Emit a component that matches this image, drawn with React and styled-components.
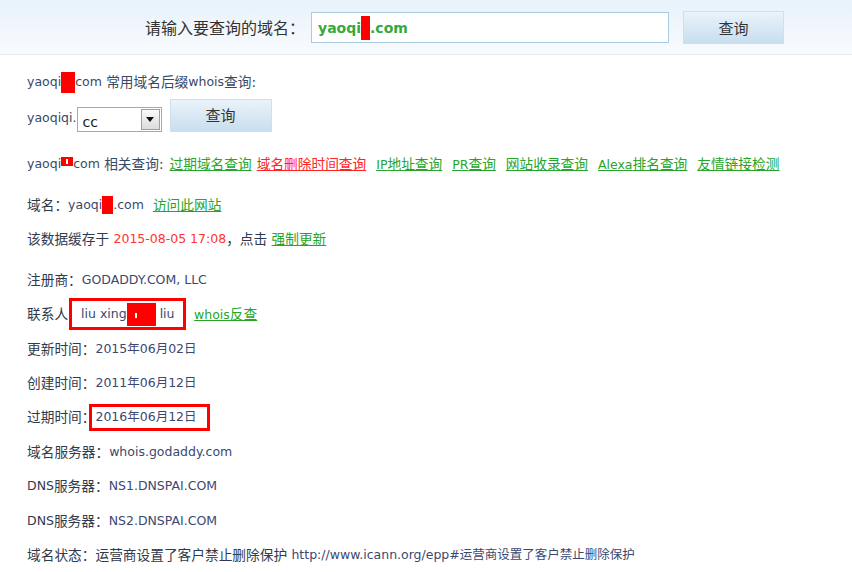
import React from "react";
import styled, { createGlobalStyle } from "styled-components";

const GlobalStyle = createGlobalStyle`
  html, body {
    margin: 0;
    padding: 0;
    background: #fff;
  }
  body {
    font-family: "DejaVu Sans", "Noto Sans CJK SC", sans-serif;
    font-size: 13.7px;
    color: #2f3a4c;
  }
`;

const Page = styled.div`
  width: 852px;
  height: 572px;
  overflow: hidden;
  background: #fff;
`;

const Header = styled.div`
  height: 54px;
  border-bottom: 1px solid #e1ebf3;
  background: linear-gradient(#e8f2fa, #f8fbfe);
  display: flex;
  align-items: center;
  padding-left: 145px;
`;

const HeaderLabel = styled.span`
  font-size: 16px;
  color: #333;
  width: 166px;
  white-space: nowrap;
`;

const SearchField = styled.div`
  box-sizing: border-box;
  width: 358px;
  height: 31px;
  margin-top: 1px;
  border: 1px solid #a9cce4;
  background: #fff;
  display: flex;
  align-items: center;
  padding-left: 6px;
  font-family: "DejaVu Sans", sans-serif;
  font-weight: bold;
  font-size: 14px;
  color: #37a83a;
`;

const QueryButton = styled.div`
  box-sizing: border-box;
  width: ${({ $w }) => $w}px;
  height: 33px;
  margin-left: ${({ $ml }) => $ml}px;
  border: 1px solid #cde0ee;
  background: linear-gradient(#eaf3fa, #c8deee);
  display: flex;
  align-items: center;
  justify-content: center;
  font-size: 15px;
  color: #333;
  align-self: ${({ $top }) => ($top ? "flex-start" : "center")};
`;

const Content = styled.div`
  padding: 10px 0 0 27px;
`;

const Row = styled.div`
  display: flex;
  align-items: center;
  height: ${({ $h }) => $h || 34}px;
  margin-top: ${({ $mt }) => $mt || 0}px;
  line-height: 20px;
  white-space: nowrap;
  color: ${({ $tone }) => $tone || "#2f3a4c"};
`;

const En = styled.span`
  font-size: 12.5px;
  color: ${({ $c }) => $c || "inherit"};
`;

const Value = styled.span`
  font-size: 12.5px;
  color: #3b4870;
`;

const Redact = styled.span`
  display: inline-block;
  width: ${({ $w }) => $w}px;
  height: ${({ $h }) => $h}px;
  background: #ff0000;
  margin-top: ${({ $dy }) => $dy || 0}px;
  position: relative;
`;

const Speck = styled.span`
  position: absolute;
  left: ${({ $x }) => $x}px;
  top: ${({ $y }) => $y}px;
  width: 2px;
  height: 5px;
  background: #fff;
`;

const Link = styled.a`
  color: ${({ $red }) => ($red ? "#ff2424" : "#27a52a")};
  text-decoration: underline;
  margin-left: ${({ $ml }) => ($ml == null ? 10 : $ml)}px;
  cursor: pointer;
`;

const Select = styled.div`
  box-sizing: border-box;
  width: 85px;
  height: 25px;
  margin-top: 3px;
  border: 1px solid #a3aab3;
  background: #fff;
  display: flex;
  align-items: stretch;
  justify-content: space-between;
`;

const SelectText = styled.span`
  font-size: 14px;
  color: #1a1a1a;
  padding: 5px 0 0 5px;
  line-height: 18px;
`;

const ArrowBox = styled.span`
  box-sizing: border-box;
  width: 19px;
  margin: 1px;
  border: 1px solid #9aa0a8;
  background: linear-gradient(#fafafa, #dcdcdc);
  display: flex;
  align-items: center;
  justify-content: center;
`;

const Arrow = styled.span`
  width: 0;
  height: 0;
  border-left: 4px solid transparent;
  border-right: 4px solid transparent;
  border-top: 5px solid #111;
`;

const MarkBox = styled.span`
  box-sizing: border-box;
  display: inline-flex;
  align-items: center;
  width: ${({ $w }) => $w}px;
  height: ${({ $h }) => $h}px;
  border: 3px solid #ff0000;
  padding-left: ${({ $pl }) => $pl}px;
  margin-left: ${({ $ml }) => $ml || 0}px;
`;

const relatedLinks = [
  { en: "", t: "过期域名查询", ml: 6 },
  { en: "", t: "域名删除时间查询", red: true, ml: 5 },
  { en: "IP", t: "地址查询" },
  { en: "PR", t: "查询" },
  { en: "", t: "网站收录查询" },
  { en: "Alexa", t: "排名查询" },
  { en: "", t: "友情链接检测" },
];

const details = [
  { label: "更新时间：", value: "2015年06月02日" },
  { label: "创建时间：", value: "2011年06月12日" },
];

const servers = [
  { label: "域名服务器：", value: "whois.godaddy.com" },
  { label: "DNS服务器：", value: "NS1.DNSPAI.COM", en: "DNS" },
  { label: "DNS服务器：", value: "NS2.DNSPAI.COM", en: "DNS" },
];

const RecordRow = styled(Row)`
  height: 34.4px;
`;

export default function App() {
  return (
    <Page>
      <GlobalStyle />
      <Header>
        <HeaderLabel>请输入要查询的域名：</HeaderLabel>
        <SearchField>
          yaoqi
          <Redact $w={9} $h={24} />
          .com
        </SearchField>
        <QueryButton $w={101} $ml={14}>查询</QueryButton>
      </Header>

      <Content>
        <Row $tone="#3a4963">
          <En>yaoqi</En>
          <Redact $w={14} $h={21} />
          <En>com</En>&nbsp;常用域名后缀<En>whois</En>查询:
        </Row>
        <Row $h={38} $tone="#3a4963">
          <En>yaoqiqi.</En>
          <Select>
            <SelectText>cc</SelectText>
            <ArrowBox>
              <Arrow />
            </ArrowBox>
          </Select>
          <QueryButton $w={102} $ml={8} $top>
            查询
          </QueryButton>
        </Row>

        <Row $mt={10} $tone="#3a4963">
          <En>yaoqi</En>
          <Redact $w={12} $h={9} $dy={-5}>
            <Speck $x={5} $y={2} />
          </Redact>
          <En>com</En>&nbsp;相关查询:
          {relatedLinks.map((l) => (
            <Link key={l.t} $red={l.red} $ml={l.ml}>
              {l.en && <En>{l.en}</En>}
              {l.t}
            </Link>
          ))}
        </Row>

        <Row $mt={7}>
          域名：<Value>yaoqi</Value>
          <Redact $w={11} $h={18} />
          <Value>.com</Value>
          <Link $ml={9}>访问此网站</Link>
        </Row>
        <Row>
          该数据缓存于&nbsp;<En $c="#ff3333">2015-08-05 17:08</En>，点击&nbsp;
          <Link $ml={0}>强制更新</Link>
        </Row>

        <Row $mt={7}>
          注册商：<Value>GODADDY.COM, LLC</Value>
        </Row>
        <RecordRow>
          联系人
          <MarkBox $w={117} $h={32} $pl={9} $ml={1}>
            <Value>liu xing</Value>
            <Redact $w={29} $h={23}>
              <Speck $x={8} $y={10} />
            </Redact>
            <Value>&nbsp;liu</Value>
          </MarkBox>
          <Link $ml={8}>
            <En>whois</En>反查
          </Link>
        </RecordRow>
        {details.map((d) => (
          <RecordRow key={d.label}>
            {d.label}
            <Value>{d.value}</Value>
          </RecordRow>
        ))}
        <RecordRow>
          过期时间：
          <MarkBox $w={121} $h={27} $pl={3} $ml={-6}>
            <Value>2016年06月12日</Value>
          </MarkBox>
        </RecordRow>
        {servers.map((s, i) => (
          <RecordRow key={i}>
            {s.en ? (
              <>
                <En>{s.en}</En>服务器：
              </>
            ) : (
              s.label
            )}
            <Value>{s.value}</Value>
          </RecordRow>
        ))}
        <RecordRow>
          域名状态：运营商设置了客户禁止删除保护&nbsp;
          <Value>http://www.icann.org/epp#运营商设置了客户禁止删除保护</Value>
        </RecordRow>
      </Content>
    </Page>
  );
}
